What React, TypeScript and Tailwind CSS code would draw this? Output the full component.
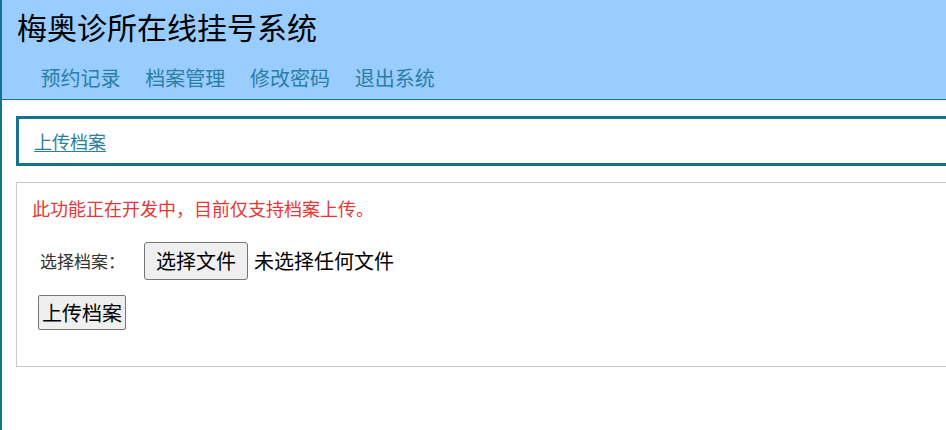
import React from "react";

const font = { fontFamily: '"Noto Sans CJK SC", "Noto Sans", sans-serif' };

export default function App() {
  return (
    <div
      className="w-full h-[430px] overflow-hidden border-l-2 border-[#17718f] bg-white"
      style={font}
    >
      <header className="bg-[#99ccff] border-b border-[#17718f] pl-[15px] pt-[8px] pb-[7px]">
        <h1 className="text-[30px] leading-[36px] text-black font-normal">梅奥诊所在线挂号系统</h1>
        <nav className="mt-[20px] ml-[23.6px] flex gap-[24.7px] text-[20px] leading-[28px] text-[#2a7fa3]">
          <a className="cursor-pointer">预约记录</a>
          <a className="cursor-pointer">档案管理</a>
          <a className="cursor-pointer">修改密码</a>
          <a className="cursor-pointer">退出系统</a>
        </nav>
      </header>

      <div className="mt-[16px] ml-[14px] w-[1000px] h-[50px] border-[3px] border-[#17718f] flex items-center pl-[15px]">
        <a className="text-[18px] leading-[24px] text-[#2b7d9c] underline underline-offset-2 cursor-pointer">
          上传档案
        </a>
      </div>

      <div className="mt-[16px] ml-[14px] w-[1000px] h-[185px] border border-[#cccccc] pl-[15px] pt-[13px]">
        <p className="text-[18px] leading-[24px] text-[#e83535]">此功能正在开发中，目前仅支持档案上传。</p>
        <div className="mt-[22px] ml-[8px] flex items-center h-[38px]">
          <span className="w-[104px] text-[17px] leading-[22px] text-[#333333]">选择档案：</span>
          <button className="h-[38px] px-[11px] bg-[#efefef] border border-[#767676] rounded-[3px] text-[20px] leading-[28px] text-black">
            选择文件
          </button>
          <span className="ml-[6px] text-[20px] leading-[28px] text-black">未选择任何文件</span>
        </div>
        <button className="mt-[15px] ml-[6px] h-[35px] px-[3px] bg-[#efefef] border border-[#767676] rounded-[2px] text-[20px] leading-[28px] text-black">
          上传档案
        </button>
      </div>
    </div>
  );
}
